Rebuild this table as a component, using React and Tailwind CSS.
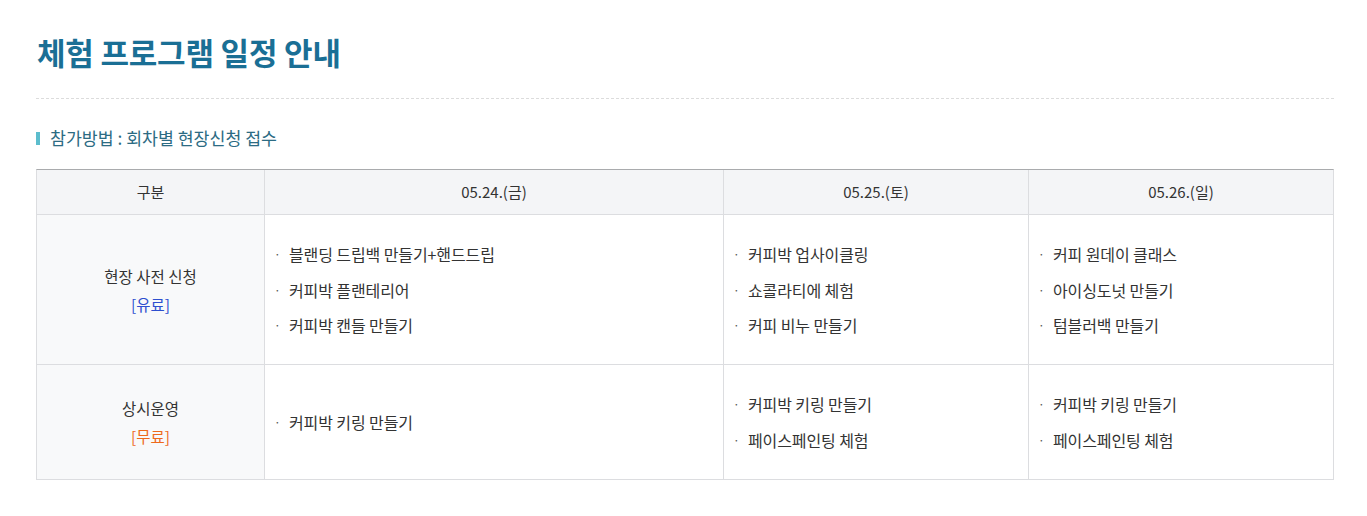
const days = ["05.24.(금)", "05.25.(토)", "05.26.(일)"];

const rows = [
  {
    label: "현장 사전 신청",
    tag: "[유료]",
    tagColor: "text-[#2d4fcf]",
    height: "h-[149px]",
    items: [
      ["블랜딩 드립백 만들기+핸드드립", "커피박 플랜테리어", "커피박 캔들 만들기"],
      ["커피박 업사이클링", "쇼콜라티에 체험", "커피 비누 만들기"],
      ["커피 원데이 클래스", "아이싱도넛 만들기", "텀블러백 만들기"],
    ],
  },
  {
    label: "상시운영",
    tag: "[무료]",
    tagColor: "text-[#ee6a1c]",
    height: "h-[115px]",
    items: [
      ["커피박 키링 만들기"],
      ["커피박 키링 만들기", "페이스페인팅 체험"],
      ["커피박 키링 만들기", "페이스페인팅 체험"],
    ],
  },
];

const cols = "grid grid-cols-[227px_459px_305px_305px]";

export default function App() {
  return (
    <div className="min-h-[516px] bg-white px-9 pt-[30px] font-['Noto_Sans_CJK_KR','Noto_Sans',sans-serif] text-[#333]">
      <h1 className="pl-px text-[31px] font-bold leading-[44px] tracking-[-0.2px] text-[#1a6f95]">
        체험 프로그램 일정 안내
      </h1>

      <div className="mt-[24px] w-[1298px] border-t border-dashed border-[#dcdcdc]" />

      <div className="mt-[27px] flex items-center gap-[10px]">
        <span className="h-[13px] w-[4px] bg-[#5cbdcd]" />
        <span className="text-[17.3px] leading-[24px] text-[#2c6b83]">
          참가방법 : 회차별 현장신청 접수
        </span>
      </div>

      <div className="mt-[19px] w-[1298px] border-t border-t-[#a9abad] border-x border-b border-x-[#dcdde0] border-b-[#dcdde0] text-[15px]">
        {/* header */}
        <div className={`${cols} h-[45px] bg-[#f4f5f7] border-b border-[#dcdde0]`}>
          <div className="flex items-center justify-center">구분</div>
          {days.map((d) => (
            <div key={d} className="flex items-center justify-center border-l border-[#dcdde0]">
              {d}
            </div>
          ))}
        </div>

        {rows.map((row, ri) => (
          <div
            key={row.label}
            className={`${cols} ${row.height} ${ri > 0 ? "border-t border-[#dcdde0]" : ""}`}
          >
            <div className="flex flex-col items-center justify-center bg-[#f8f9fa] text-[15.5px] leading-[28px]">
              <span>{row.label}</span>
              <span className={row.tagColor}>{row.tag}</span>
            </div>
            {row.items.map((list, ci) => (
              <div key={ci} className="flex flex-col justify-center border-l border-[#dcdde0] pl-[9px]">
                <ul className="flex flex-col gap-[11.5px]">
                  {list.map((it, ii) => (
                    <li key={ii} className="flex items-center text-[16px] leading-[24px] tracking-[-0.1px]">
                      <span className="w-[15px] text-[12px] text-[#555]">·</span>
                      <span>{it}</span>
                    </li>
                  ))}
                </ul>
              </div>
            ))}
          </div>
        ))}
      </div>
    </div>
  );
}
